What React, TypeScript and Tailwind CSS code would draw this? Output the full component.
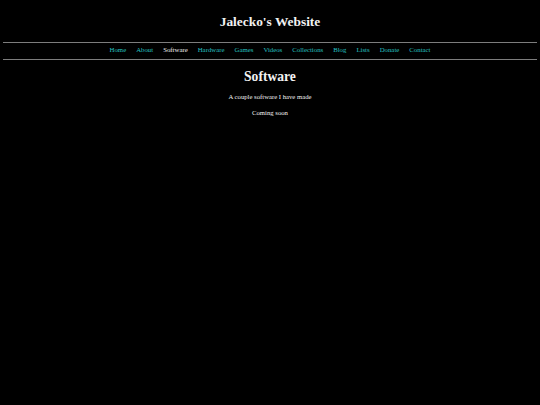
const NAV_LINKS = [
  "Home",
  "About",
  "Software",
  "Hardware",
  "Games",
  "Videos",
  "Collections",
  "Blog",
  "Lists",
  "Donate",
  "Contact",
];

const CURRENT = "Software";

export default function App() {
  return (
    <div className="min-h-screen bg-black px-[3.33px] text-[#f2f2f2] font-['Liberation_Serif','Times_New_Roman',serif]">
      {/* Header */}
      <h1 className="pt-[14px] text-center text-[13.4px] font-bold leading-[16px]">
        Jalecko's Website
      </h1>

      {/* Nav */}
      <div className="mt-[12px] h-px bg-[#7d7d7d]" />
      <nav className="flex justify-center gap-[10px] pt-[3.4px] pb-[4.6px] text-[6.8px] leading-[8px]">
        {NAV_LINKS.map((name) => (
          <a
            key={name}
            href="#"
            className={name === CURRENT ? "text-[#f2f2f2]" : "text-[#26c0c0]"}
          >
            {name}
          </a>
        ))}
      </nav>
      <div className="h-px bg-[#7d7d7d]" />

      {/* Content */}
      <main className="pt-[9px] text-center">
        <h1 className="text-[13.6px] font-bold leading-[16px]">Software</h1>
        <p className="mt-[8.5px] text-[6.7px] leading-[8px]">
          A couple software I have made
        </p>
        <p className="mt-[7.5px] text-[6.7px] leading-[8px]">Coming soon</p>
      </main>
    </div>
  );
}
